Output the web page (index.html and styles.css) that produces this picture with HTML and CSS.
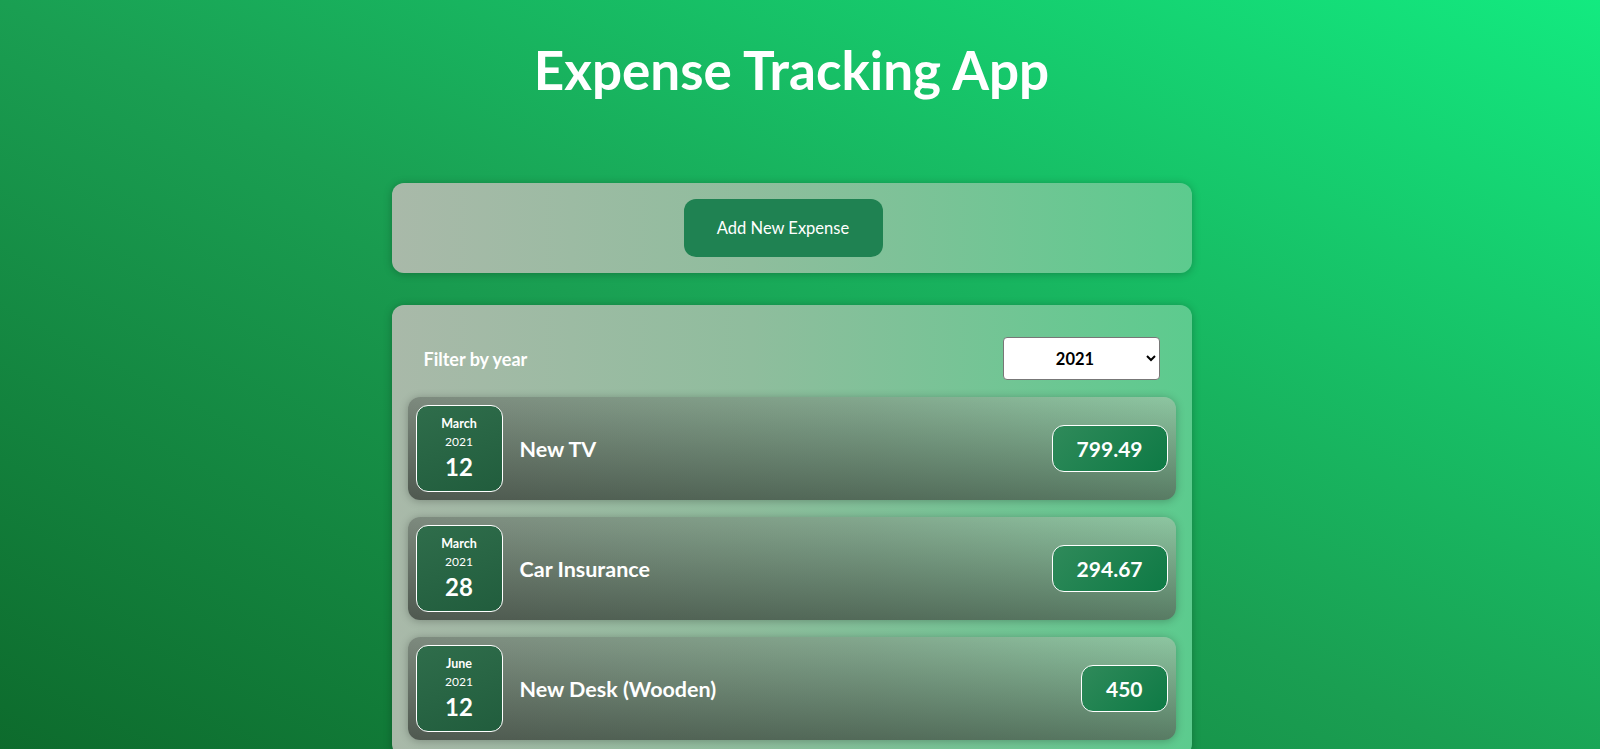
FILE: index.html
```html
<!DOCTYPE html>
<html lang="en">
<head>
<meta charset="utf-8">
<title>Expense Tracking App</title>
<link rel="stylesheet" href="styles.css">
</head>
<body>
  <h1 class="app-title">Expense Tracking App</h1>

  <section class="card new-expense">
    <button class="btn-add" type="button">Add New Expense</button>
  </section>

  <section class="card expenses">
    <div class="filter">
      <label class="filter-label" for="year">Filter by year</label>
      <select id="year" class="filter-select">
        <option>2022</option>
        <option selected>2021</option>
        <option>2020</option>
        <option>2019</option>
      </select>
    </div>

    <ul class="expense-list">
      <li class="expense-item">
        <div class="expense-date">
          <div class="date-month">March</div>
          <div class="date-year">2021</div>
          <div class="date-day">12</div>
        </div>
        <div class="expense-desc">
          <h2 class="expense-title">New TV</h2>
          <div class="expense-price">799.49</div>
        </div>
      </li>
      <li class="expense-item">
        <div class="expense-date">
          <div class="date-month">March</div>
          <div class="date-year">2021</div>
          <div class="date-day">28</div>
        </div>
        <div class="expense-desc">
          <h2 class="expense-title">Car Insurance</h2>
          <div class="expense-price">294.67</div>
        </div>
      </li>
      <li class="expense-item">
        <div class="expense-date">
          <div class="date-month">June</div>
          <div class="date-year">2021</div>
          <div class="date-day">12</div>
        </div>
        <div class="expense-desc">
          <h2 class="expense-title">New Desk (Wooden)</h2>
          <div class="expense-price">450</div>
        </div>
      </li>
    </ul>
  </section>
</body>
</html>
```

FILE: styles.css
```css
* { box-sizing: border-box; }

html {
  min-height: 100%;
  background: linear-gradient(to top right, #0c6629 0%, #1a9f52 50%, #13ea80 100%);
}

body {
  margin: 0;
  padding: 0 17px 64px 0;
  font-family: "Lato", "Open Sans", sans-serif;
  color: #fff;
}

.app-title {
  margin: 0;
  padding: 39px 0 0;
  height: 183px;
  text-align: center;
  font-size: 53px;
  font-weight: 700;
  line-height: 62px;
  color: #fff;
}

.card {
  width: 800px;
  margin: 0 auto;
  border-radius: 12px;
  background: linear-gradient(to right, #a9b9a9 0%, #8fbd9d 45%, #5ccb8e 100%);
  box-shadow: 0 1px 8px rgba(0, 0, 0, 0.25);
}

.new-expense {
  height: 90px;
  display: flex;
  align-items: center;
  justify-content: center;
  padding-right: 17px;
}

.btn-add {
  width: 199px;
  height: 58px;
  border: none;
  border-radius: 12px;
  background: #1f8252;
  color: #fff;
  font-family: inherit;
  font-size: 16.5px;
  cursor: pointer;
}

.expenses {
  margin-top: 32px;
  padding: 16px;
}

.filter {
  display: flex;
  align-items: center;
  justify-content: space-between;
  height: 76px;
  padding: 0 16px 1px 16px;
}

.filter-label {
  font-size: 18px;
  font-weight: 700;
}

.filter-select {
  width: 157px;
  height: 43px;
  border: 1px solid #777;
  border-radius: 4px;
  background: #fff;
  color: #000;
  font-family: inherit;
  font-size: 16.5px;
  font-weight: 700;
  text-align: center;
  text-align-last: center;
}

.expense-list {
  list-style: none;
  margin: 0;
  padding: 0;
  display: flex;
  flex-direction: column;
  gap: 17px;
}

.expense-item {
  display: flex;
  align-items: center;
  gap: 17px;
  padding: 8px;
  border-radius: 12px;
  background:
    linear-gradient(to bottom, rgba(0, 0, 0, 0) 0%, rgba(15, 20, 15, 0.42) 100%),
    linear-gradient(to right, #7d8a7e 0%, #83a88e 60%, #8dc6a1 100%);
  box-shadow: 0 1px 8px rgba(0, 0, 0, 0.25);
}

.expense-date {
  width: 87px;
  height: 87px;
  flex: none;
  display: flex;
  flex-direction: column;
  align-items: center;
  justify-content: center;
  border: 1px solid #fff;
  border-radius: 12px;
  background: linear-gradient(160deg, #2f6d4b, #215d3d);
  line-height: 1;
}

.date-month {
  font-size: 12.5px;
  font-weight: 700;
}

.date-year {
  margin-top: 5px;
  font-size: 12px;
}

.date-day {
  margin-top: 7px;
  font-size: 24px;
  font-weight: 700;
}

.expense-desc {
  flex: 1;
  display: flex;
  align-items: center;
  justify-content: space-between;
}

.expense-title {
  margin: 0;
  font-size: 21.5px;
  font-weight: 700;
}

.expense-price {
  padding: 10px 24px;
  border: 1px solid #fff;
  border-radius: 12px;
  background: linear-gradient(135deg, #2f8a5a 0%, #0e7a45 100%);
  font-size: 21px;
  font-weight: 700;
  line-height: 25px;
}
```
